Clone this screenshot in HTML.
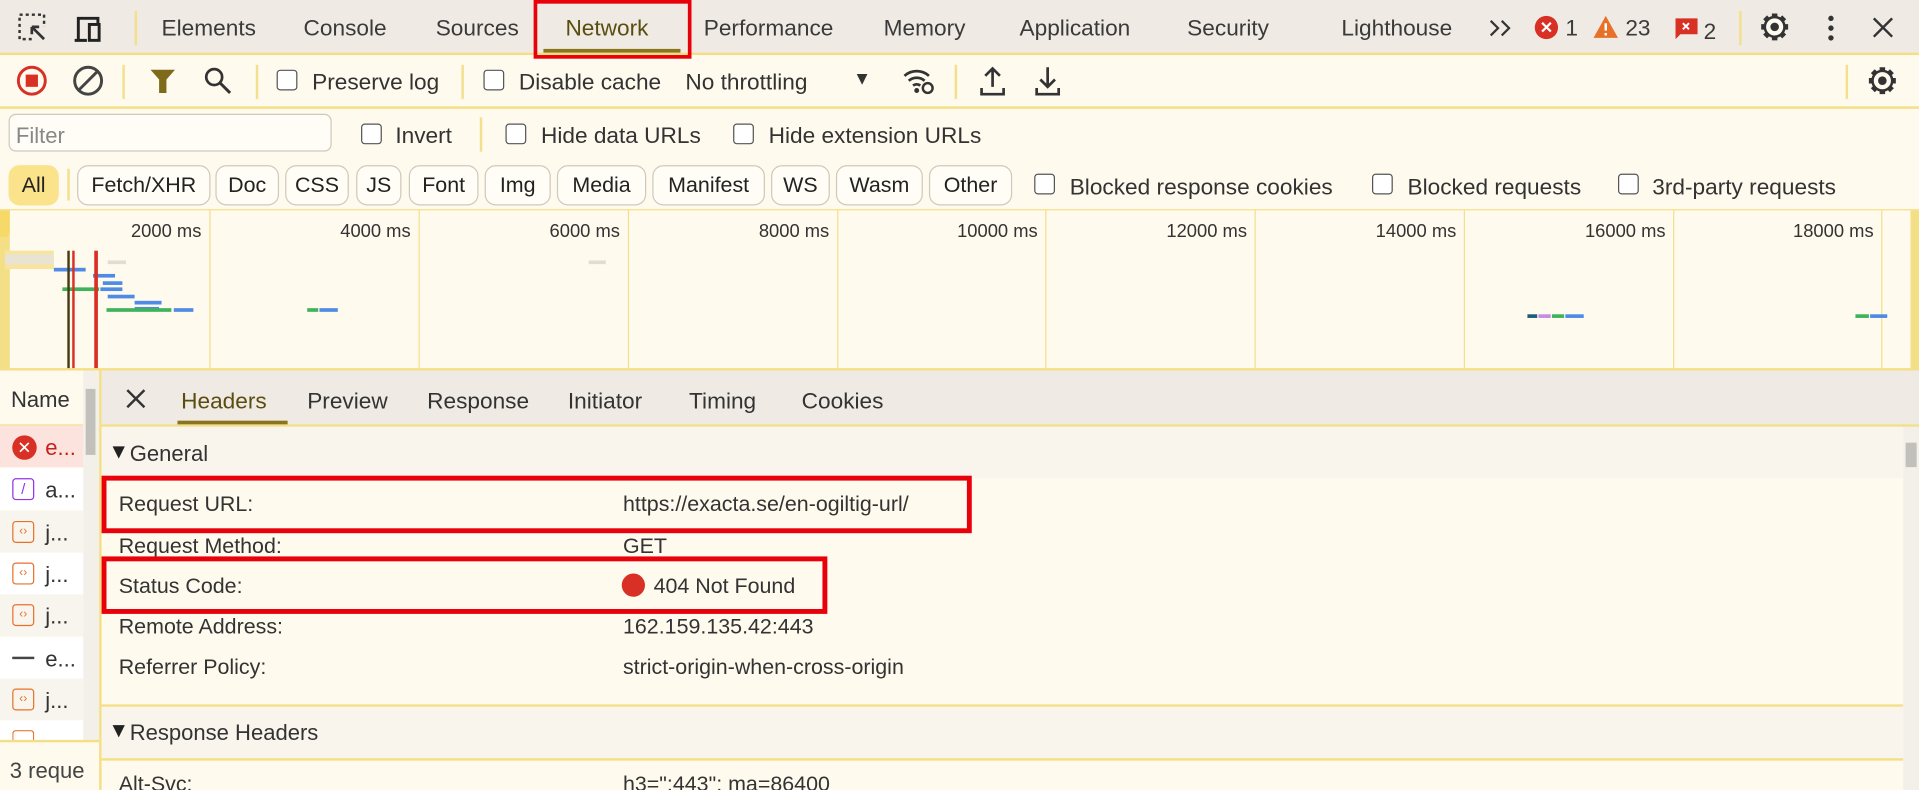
<!DOCTYPE html>
<html><head><meta charset="utf-8">
<style>
html,body{margin:0;padding:0;width:1919px;height:790px;overflow:hidden;background:#fefaee;}
#w{position:absolute;left:0;top:0;width:1568px;height:646px;transform:scale(1.2239,1.2229);transform-origin:0 0;font-family:"Liberation Sans",sans-serif;font-size:18px;color:#333;background:#fefaee;overflow:hidden}
.a{position:absolute;white-space:nowrap}
.t{position:absolute;top:12px;font-size:18.5px;color:#3a3a3a}
.sep{position:absolute;width:2px;background:#f3df8c}
.cb{position:absolute;width:15px;height:15px;border:1.6px solid #555;border-radius:3px;background:#fff}
.chip{position:absolute;top:135px;height:31px;border:1px solid #cfc9bb;border-radius:9px;font-size:17.5px;line-height:31px;text-align:center;color:#222;background:#fffdf5}
.gl{position:absolute;top:172px;width:1px;height:130px;background:#f3df8c}
.ml{position:absolute;top:181px;font-size:15px;color:#333}
.bar{position:absolute;height:3px}
.row{position:absolute;left:0;width:68px;height:34px}
.lbl{position:absolute;left:97px;font-size:17.5px}
.val{position:absolute;left:509px;font-size:17.5px}
.red{position:absolute;border:4px solid #e8000b;box-sizing:border-box}
.tri{display:inline-block;width:0;height:0;border-left:5px solid transparent;border-right:5px solid transparent;border-top:10px solid #222;margin-right:4px;vertical-align:2px}
</style></head><body><div id="w">
<svg width="0" height="0" style="position:absolute"><defs><g id="gear"><g stroke="#333" stroke-width="4.5" stroke-linecap="butt"><line x1="13" y1="2" x2="13" y2="6"/><line x1="13" y1="20" x2="13" y2="24"/><line x1="2" y1="13" x2="6" y2="13"/><line x1="20" y1="13" x2="24" y2="13"/><line x1="5.2" y1="5.2" x2="8" y2="8"/><line x1="18" y1="18" x2="20.8" y2="20.8"/><line x1="5.2" y1="20.8" x2="8" y2="18"/><line x1="18" y1="8" x2="20.8" y2="5.2"/></g><circle cx="13" cy="13" r="8" fill="none" stroke="#333" stroke-width="2"/><circle cx="13" cy="13" r="8" fill="#fefaee" stroke="#333" stroke-width="2"/><circle cx="13" cy="13" r="3.5" fill="#333"/></g></defs></svg>
<!-- top tab bar -->
<div class="a" style="left:0;top:0;width:1568px;height:43px;background:#efebe4;border-bottom:2px solid #f5df86"></div>
<svg class="a" style="left:14px;top:10px" width="26" height="26" viewBox="0 0 26 26"><rect x="2" y="2" width="20" height="20" fill="none" stroke="#333" stroke-width="2" stroke-dasharray="2.5 2.5"/><rect x="12" y="12" width="14" height="14" fill="#efebe4"/><path d="M12 12l10 10M12 12h6M12 12v6" stroke="#333" stroke-width="2.2" fill="none"/></svg>
<svg class="a" style="left:60px;top:12px" width="26" height="24" viewBox="0 0 26 24"><path d="M4 21V3h16v4M1 21h10" stroke="#222" stroke-width="2.4" fill="none"/><rect x="13" y="8" width="8" height="13" fill="none" stroke="#222" stroke-width="2.4"/></svg>
<div class="sep" style="left:110px;top:9px;height:28px"></div>
<div class="t" style="left:132px">Elements</div>
<div class="t" style="left:248px">Console</div>
<div class="t" style="left:356px">Sources</div>
<div class="t" style="left:462px;color:#5b4d10">Network</div>
<div class="a" style="left:444px;top:40px;width:112px;height:3px;background:#8a7420"></div>
<div class="red" style="left:436px;top:0;width:129px;height:48px;border-width:3px"></div>
<div class="t" style="left:575px">Performance</div>
<div class="t" style="left:722px">Memory</div>
<div class="t" style="left:833px">Application</div>
<div class="t" style="left:970px">Security</div>
<div class="t" style="left:1096px">Lighthouse</div>
<svg class="a" style="left:1216px;top:15px" width="22" height="16"><path d="M2 2l6 6-6 6M11 2l6 6-6 6" fill="none" stroke="#333" stroke-width="1.8"/></svg>
<div class="a" style="left:1254px;top:13px;width:19px;height:19px;border-radius:50%;background:#d93025;color:#fff;font-size:13px;line-height:19px;text-align:center;font-weight:bold">✕</div>
<div class="t" style="left:1279px">1</div>
<svg class="a" style="left:1301px;top:12px" width="22" height="20" viewBox="0 0 22 20"><path d="M11 1L21 19H1z" fill="#e8712a"/><path d="M11 7v6M11 15v2" stroke="#fff" stroke-width="2"/></svg>
<div class="t" style="left:1328px">23</div>
<svg class="a" style="left:1368px;top:14px" width="20" height="20" viewBox="0 0 20 20"><path d="M1 1h18v13H5l-4 4z" fill="#d93025"/><path d="M7 5l5 5M12 5l-5 5" stroke="#fff" stroke-width="1.6"/></svg>
<div class="t" style="left:1392px;top:15px">2</div>
<div class="sep" style="left:1421px;top:9px;height:28px"></div>
<svg class="a" style="left:1437px;top:9px" width="26" height="26"><use href="#gear"/></svg>
<svg class="a" style="left:1490px;top:12px" width="12" height="22"><circle cx="6" cy="3" r="2.2" fill="#333"/><circle cx="6" cy="11" r="2.2" fill="#333"/><circle cx="6" cy="19" r="2.2" fill="#333"/></svg>
<svg class="a" style="left:1530px;top:14px" width="17" height="17"><path d="M1 1l15 15M16 1L1 16" stroke="#333" stroke-width="2"/></svg>
<!-- toolbar -->
<div class="a" style="left:0;top:87px;width:1568px;height:2px;background:#f5df86"></div>
<svg class="a" style="left:13px;top:53px" width="26" height="26"><circle cx="13" cy="13" r="11" fill="none" stroke="#d93025" stroke-width="2.4"/><rect x="8" y="8" width="10" height="10" fill="#d93025"/></svg>
<svg class="a" style="left:59px;top:53px" width="26" height="26"><circle cx="13" cy="13" r="11" fill="none" stroke="#444" stroke-width="2.4"/><path d="M5 21L21 5" stroke="#444" stroke-width="2.4"/></svg>
<div class="sep" style="left:100px;top:53px;height:28px"></div>
<svg class="a" style="left:122px;top:55px" width="22" height="22"><path d="M1 2h20l-7 8v11h-6V10z" fill="#7e6a1a"/></svg>
<svg class="a" style="left:166px;top:54px" width="24" height="24"><circle cx="9" cy="9" r="6.5" fill="none" stroke="#333" stroke-width="2.2"/><path d="M14 14l8 8" stroke="#333" stroke-width="2.4"/></svg>
<div class="sep" style="left:209px;top:53px;height:28px"></div>
<div class="cb" style="left:226px;top:57px"></div><div class="a" style="left:255px;top:56px;font-size:18.5px">Preserve log</div>
<div class="sep" style="left:377px;top:53px;height:28px"></div>
<div class="cb" style="left:395px;top:57px"></div><div class="a" style="left:424px;top:56px;font-size:18.5px">Disable cache</div>
<div class="a" style="left:560px;top:56px;font-size:18.5px">No throttling</div>
<div class="a" style="left:697px;top:56px;font-size:15px">▼</div>
<svg class="a" style="left:737px;top:54px" width="28" height="24"><path d="M2 8a15 15 0 0 1 20 0M5.5 12a10 10 0 0 1 13 0M9 16a5 5 0 0 1 6 0" fill="none" stroke="#333" stroke-width="2.2"/><circle cx="12" cy="20" r="2" fill="#333"/><circle cx="21" cy="18" r="4" fill="none" stroke="#333" stroke-width="2"/></svg>
<div class="sep" style="left:780px;top:53px;height:28px"></div>
<svg class="a" style="left:800px;top:53px" width="22" height="26"><path d="M11 3v15M5 9l6-6 6 6M2 19v5h18v-5" fill="none" stroke="#333" stroke-width="2.2"/></svg>
<svg class="a" style="left:845px;top:53px" width="22" height="26"><path d="M11 2v16M5 12l6 6 6-6M2 19v5h18v-5" fill="none" stroke="#333" stroke-width="2.2"/></svg>
<div class="sep" style="left:1508px;top:53px;height:28px"></div>
<svg class="a" style="left:1525px;top:53px" width="26" height="26"><use href="#gear"/></svg>
<!-- filter row -->
<div class="a" style="left:7px;top:93px;width:264px;height:31px;border:1.5px solid #cfc9bb;border-radius:6px;background:#fffdf6;box-sizing:border-box"></div>
<div class="a" style="left:13px;top:101px;font-size:18px;color:#888">Filter</div>
<div class="cb" style="left:295px;top:101px"></div><div class="a" style="left:323px;top:100px;font-size:18.5px">Invert</div>
<div class="sep" style="left:392px;top:96px;height:28px"></div>
<div class="cb" style="left:413px;top:101px"></div><div class="a" style="left:442px;top:100px;font-size:18.5px">Hide data URLs</div>
<div class="cb" style="left:599px;top:101px"></div><div class="a" style="left:628px;top:100px;font-size:18.5px">Hide extension URLs</div>
<!-- chips -->
<div class="chip" style="left:7px;width:39px;background:#fbe38c;border-color:#fbe38c">All</div>
<div class="sep" style="left:55px;top:138px;height:26px"></div>
<div class="chip" style="left:63px;width:107px">Fetch/XHR</div>
<div class="chip" style="left:176px;width:50px">Doc</div>
<div class="chip" style="left:233px;width:50px">CSS</div>
<div class="chip" style="left:291px;width:35px">JS</div>
<div class="chip" style="left:334px;width:55px">Font</div>
<div class="chip" style="left:396px;width:52px">Img</div>
<div class="chip" style="left:455px;width:71px">Media</div>
<div class="chip" style="left:533px;width:90px">Manifest</div>
<div class="chip" style="left:630px;width:46px">WS</div>
<div class="chip" style="left:683px;width:69px">Wasm</div>
<div class="chip" style="left:759px;width:66px">Other</div>
<div class="cb" style="left:845px;top:142px"></div><div class="a" style="left:874px;top:142px;font-size:18.5px">Blocked response cookies</div>
<div class="cb" style="left:1121px;top:142px"></div><div class="a" style="left:1150px;top:142px;font-size:18.5px">Blocked requests</div>
<div class="cb" style="left:1322px;top:142px"></div><div class="a" style="left:1350px;top:142px;font-size:18.5px">3rd-party requests</div>
<div class="a" style="left:0;top:171px;width:1568px;height:1px;background:#f5df86"></div>
<!-- overview -->
<div class="gl" style="left:171px"></div><div class="gl" style="left:342px"></div><div class="gl" style="left:513px"></div><div class="gl" style="left:684px"></div><div class="gl" style="left:854px"></div><div class="gl" style="left:1025px"></div><div class="gl" style="left:1196px"></div><div class="gl" style="left:1367px"></div><div class="gl" style="left:1537px"></div>
<div class="ml" style="left:107px">2000 ms</div><div class="ml" style="left:278px">4000 ms</div><div class="ml" style="left:449px">6000 ms</div><div class="ml" style="left:620px">8000 ms</div><div class="ml" style="left:782px">10000 ms</div><div class="ml" style="left:953px">12000 ms</div><div class="ml" style="left:1124px">14000 ms</div><div class="ml" style="left:1295px">16000 ms</div><div class="ml" style="left:1465px">18000 ms</div>
<div class="a" style="left:0;top:172px;width:8px;height:130px;background:#f5df86"></div>
<div class="a" style="left:0;top:172px;width:8px;height:22px;background:#f7d96a;border-radius:0 0 4px 0"></div>
<div class="a" style="left:1561px;top:172px;width:7px;height:130px;background:#f5df86"></div>
<div class="a" style="left:4px;top:205px;width:40px;height:15px;background:#f6e4a0"></div>
<div class="bar" style="left:4px;top:208px;width:40px;height:8px;background:#e9e3d4"></div>
<div class="bar" style="left:88px;top:213px;width:15px;background:#e3ddd0"></div>
<div class="bar" style="left:481px;top:213px;width:14px;background:#e3ddd0"></div>
<div class="bar" style="left:44px;top:219px;width:26px;background:#4f8ae6"></div>
<div class="bar" style="left:76px;top:224px;width:18px;background:#4f8ae6"></div>
<div class="bar" style="left:84px;top:230px;width:16px;background:#4f8ae6"></div>
<div class="bar" style="left:51px;top:235px;width:30px;background:#3fb35c"></div>
<div class="bar" style="left:82px;top:235px;width:18px;background:#4f8ae6"></div>
<div class="bar" style="left:88px;top:241px;width:22px;background:#4f8ae6"></div>
<div class="bar" style="left:110px;top:246px;width:22px;background:#4f8ae6"></div>
<div class="bar" style="left:110px;top:251px;width:20px;background:#4f8ae6"></div>
<div class="bar" style="left:87px;top:252px;width:53px;background:#3fb35c"></div>
<div class="bar" style="left:142px;top:252px;width:16px;background:#4f8ae6"></div>
<div class="bar" style="left:251px;top:252px;width:9px;background:#3fb35c"></div>
<div class="bar" style="left:261px;top:252px;width:15px;background:#4f8ae6"></div>
<div class="bar" style="left:1248px;top:257px;width:8px;background:#1b5e7a"></div>
<div class="bar" style="left:1257px;top:257px;width:10px;background:#c98ae6"></div>
<div class="bar" style="left:1268px;top:257px;width:10px;background:#3fb35c"></div>
<div class="bar" style="left:1279px;top:257px;width:15px;background:#4f8ae6"></div>
<div class="bar" style="left:1516px;top:257px;width:11px;background:#3fb35c"></div>
<div class="bar" style="left:1528px;top:257px;width:14px;background:#4f8ae6"></div>
<div class="a" style="left:55px;top:205px;width:2px;height:97px;background:#4a3a10"></div>
<div class="a" style="left:59px;top:205px;width:2px;height:97px;background:#d93025"></div>
<div class="a" style="left:77px;top:205px;width:3px;height:97px;background:#d93025"></div>
<div class="a" style="left:0;top:301px;width:1568px;height:2px;background:#f5df86"></div>
<!-- left panel -->
<div class="a" style="left:0;top:303px;width:68px;height:44px;background:#fefaee;border-bottom:1px solid #f5df86"></div>
<div class="a" style="left:9px;top:317px;font-size:18px">Name</div>
<div class="a" style="left:68px;top:303px;width:13px;height:302px;background:#f3f0ea"></div>
<div class="a" style="left:70px;top:318px;width:8px;height:54px;background:#c2c0bb"></div>
<div class="a" style="left:81px;top:303px;width:2px;height:343px;background:#f5df86"></div>
<div class="row" style="top:348px;background:#fde3dd"></div>
<div class="a" style="left:10px;top:356px;width:20px;height:20px;border-radius:50%;background:#d93025;color:#fff;font-size:14px;line-height:20px;text-align:center">✕</div>
<div class="a" style="left:37px;top:356px;color:#c5221f">e...</div>
<div class="row" style="top:383px;background:#fff"></div>
<div class="a" style="left:10px;top:391px;width:16px;height:16px;border:1.5px solid #9334e6;border-radius:3px;color:#9334e6;font-size:12px;line-height:16px;text-align:center">/</div>
<div class="a" style="left:37px;top:391px">a...</div>
<div class="row" style="top:418px;background:#f8f5ee"></div>
<div class="row" style="top:452px;background:#fff"></div>
<div class="row" style="top:486px;background:#f8f5ee"></div>
<div class="row" style="top:521px;background:#fff"></div>
<div class="row" style="top:555px;background:#f8f5ee"></div>
<div class="row" style="top:589px;background:#fff;height:16px"></div>
<div class="a" style="left:10px;top:426px;width:16px;height:16px;border:1.5px solid #e8712a;border-radius:3px;color:#e8712a;font-size:10px;line-height:16px;text-align:center">‹›</div><div class="a" style="left:37px;top:426px">j...</div>
<div class="a" style="left:10px;top:460px;width:16px;height:16px;border:1.5px solid #e8712a;border-radius:3px;color:#e8712a;font-size:10px;line-height:16px;text-align:center">‹›</div><div class="a" style="left:37px;top:460px">j...</div>
<div class="a" style="left:10px;top:494px;width:16px;height:16px;border:1.5px solid #e8712a;border-radius:3px;color:#e8712a;font-size:10px;line-height:16px;text-align:center">‹›</div><div class="a" style="left:37px;top:494px">j...</div>
<div class="a" style="left:10px;top:537px;width:18px;height:2px;background:#444"></div><div class="a" style="left:37px;top:529px">e...</div>
<div class="a" style="left:10px;top:563px;width:16px;height:16px;border:1.5px solid #e8712a;border-radius:3px;color:#e8712a;font-size:10px;line-height:16px;text-align:center">‹›</div><div class="a" style="left:37px;top:563px">j...</div>
<div class="a" style="left:10px;top:597px;width:16px;height:8px;border:1.5px solid #e8712a;border-bottom:none;border-radius:3px 3px 0 0"></div>
<div class="a" style="left:0;top:605px;width:81px;height:2px;background:#f5df86"></div>
<div class="a" style="left:8px;top:620px;font-size:18px;color:#444">3 reque</div>
<!-- detail tabs -->
<div class="a" style="left:83px;top:303px;width:1485px;height:44px;background:#efebe4;border-bottom:2px solid #f5df86"></div>
<svg class="a" style="left:103px;top:318px" width="16" height="16"><path d="M1 1l14 14M15 1L1 15" stroke="#333" stroke-width="2"/></svg>
<div class="a" style="left:148px;top:317px;font-size:18.5px;color:#5b4d10">Headers</div>
<div class="a" style="left:145px;top:344px;width:90px;height:3px;background:#8a7420"></div>
<div class="a" style="left:251px;top:317px;font-size:18.5px">Preview</div>
<div class="a" style="left:349px;top:317px;font-size:18.5px">Response</div>
<div class="a" style="left:464px;top:317px;font-size:18.5px">Initiator</div>
<div class="a" style="left:563px;top:317px;font-size:18.5px">Timing</div>
<div class="a" style="left:655px;top:317px;font-size:18.5px">Cookies</div>
<!-- general -->
<div class="a" style="left:83px;top:349px;width:1472px;height:42px;background:#f9f5ec"></div>
<div class="a" style="left:92px;top:361px;font-size:18px"><span class="tri"></span>General</div>
<div class="lbl" style="top:402px">Request URL:</div><div class="val" style="top:402px">https://exacta.se/en-ogiltig-url/</div>
<div class="lbl" style="top:436px">Request Method:</div><div class="val" style="top:436px">GET</div>
<div class="lbl" style="top:469px">Status Code:</div>
<div class="a" style="left:508px;top:469px;width:19px;height:19px;border-radius:50%;background:#d93025"></div>
<div class="val" style="left:534px;top:469px">404 Not Found</div>
<div class="lbl" style="top:502px">Remote Address:</div><div class="val" style="top:502px">162.159.135.42:443</div>
<div class="lbl" style="top:535px">Referrer Policy:</div><div class="val" style="top:535px">strict-origin-when-cross-origin</div>
<div class="red" style="left:83px;top:389px;width:711px;height:47px"></div>
<div class="red" style="left:83px;top:455px;width:593px;height:47px"></div>
<div class="a" style="left:83px;top:576px;width:1472px;height:2px;background:#f5df86"></div>
<div class="a" style="left:83px;top:578px;width:1472px;height:42px;background:#f9f5ec"></div>
<div class="a" style="left:92px;top:589px;font-size:18px"><span class="tri"></span>Response Headers</div>
<div class="a" style="left:83px;top:620px;width:1472px;height:2px;background:#f5df86"></div>
<div class="lbl" style="top:631px">Alt-Svc:</div><div class="val" style="top:631px">h3=":443"; ma=86400</div>
<div class="a" style="left:1555px;top:349px;width:13px;height:297px;background:#f3f0ea"></div>
<div class="a" style="left:1557px;top:362px;width:9px;height:20px;background:#c2c0bb"></div>
</div></body></html>
